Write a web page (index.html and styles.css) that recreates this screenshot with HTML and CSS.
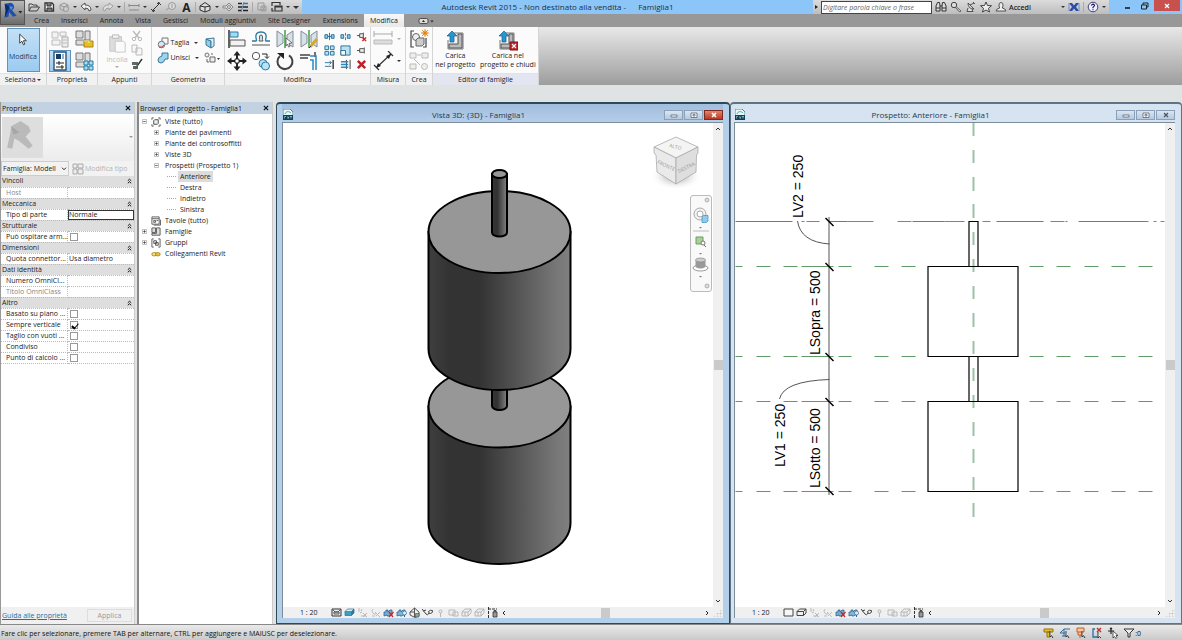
FILE: index.html
```html
<!DOCTYPE html>
<html lang="it">
<head>
  <meta charset="UTF-8">
  <meta name="viewport" content="width=device-width, initial-scale=1.0">
  <title>Autodesk Revit 2015 - Famiglia1</title>
  <link rel="stylesheet" href="styles.css">
</head>
<body>

  <!-- Shared icons -->
  <svg class="sprite" aria-hidden="true">
    <symbol id="i-rvt" viewBox="0 0 10 11"><path d="M0 0h7l3 3v5H0z" fill="#e9f6f6" stroke="#2d6f86" stroke-width=".8"/><path d="M2 5c1-3 4-3 6-1" stroke="#4ba8a4" fill="none"/><path d="M0 6h10v5H0z" fill="#0b4259"/><path d="M1.500 9.500v-2h1.500M4.500 7.500l.7 2 .7-2M7 7.500h2M8 7.500v2" stroke="#cfe6f0" stroke-width=".6" fill="none"/></symbol>
    <symbol id="i-box" viewBox="0 0 11 11"><path d="M1 4.500h6.500v4H1zM1 4.500l2.500-2.500h6.500L7.500 4.500M10 2v4L7.500 8.500" fill="none" stroke="#444"/></symbol>
    <symbol id="i-boxblue" viewBox="0 0 11 11"><path d="M1 4.500h6.500v4H1z" fill="#39a0c4"/><path d="M1 4.500l2.500-2.500h6.500L7.500 4.500z" fill="#d7f0f7"/><path d="M10 2v4L7.500 8.500v-4z" fill="#2f7997"/><path d="M1 4.500h6.500v4H1zM1 4.500l2.500-2.500h6.500L7.500 4.500M10 2v4L7.500 8.500" fill="none" stroke="#316f88" stroke-width=".7"/></symbol>
    <symbol id="i-sun" viewBox="0 0 11 11"><path d="M2 1v2M1 4h2M5 2L4 4M3 6l2-1M6 6l4 4M10 6L6 10M4 9h5" stroke="#b9b9b9" fill="none"/></symbol>
    <symbol id="i-shade" viewBox="0 0 11 11"><path d="M3 2a3 3 0 0 0 3 5M5 5l5 5M10 5L6 9M2 9h3" stroke="#bdbdbd" fill="none"/></symbol>
    <symbol id="i-crop" viewBox="0 0 11 11"><path d="M1 5h2V3h2v2l2-2h2v5H7l-1 1H4V8L1 9z" fill="#6fb0d8" stroke="#275a83" stroke-width=".7"/><path d="M6 5l4 5M10.500 5L6 10" stroke="#c22c2c" stroke-width="1.300"/></symbol>
    <symbol id="i-crop2" viewBox="0 0 11 11"><path d="M1 5h2V3h2v2l2-2h2v5H7l-1 1H4V8L1 9z" fill="#7db8dc" stroke="#275a83" stroke-width=".7"/><circle cx="8.500" cy="6" r="2" fill="#e4f2fa" stroke="#33668c" stroke-width=".7"/><path d="M8.500 8v2" stroke="#33668c"/></symbol>
    <symbol id="i-house" viewBox="0 0 11 11"><path d="M1 5l4.500-4L10 5v4l-4 1.500L1 8zM5.500 1v4M1 5l4.500 0V10" fill="none" stroke="#454545" stroke-width=".9"/><path d="M6.500 6.500h3.500v3.500H6.500z" fill="#8aa" stroke="#444" stroke-width=".6"/></symbol>
    <symbol id="i-glasses" viewBox="0 0 11 11"><path d="M0 2l4 5q1.500 1.500 2.500 0t0-2.500q2-2 4-1 .5 2.500-2 3L6.500 6M1 4l3-1" fill="none" stroke="#444"/></symbol>
    <symbol id="i-bulb" viewBox="0 0 11 11"><circle cx="5.500" cy="4.500" r="1.500" fill="none" stroke="#b4b4b4"/><path d="M5.500 6v4" stroke="#b4b4b4"/></symbol>
    <symbol id="i-ghost" viewBox="0 0 11 11"><path d="M1 3h6v5H1zM5 5h5v4H5z" fill="none" stroke="#b4b4b4" stroke-width=".9"/></symbol>
    <symbol id="i-ghost2" viewBox="0 0 11 11"><path d="M1 5l3-3h6v4L7 9H1zM1 5h6v4M7 5l3-3M4 5v4" fill="none" stroke="#b0b0b0" stroke-width=".9"/></symbol>
    <symbol id="i-lock" viewBox="0 0 11 11"><path d="M1.500 0v11M1 2h9" stroke="#333" stroke-dasharray="3 1"/><path d="M6 5h4v5H6zM7 5V3.500h2V5" fill="#999" stroke="#333" stroke-width=".8"/></symbol>
    <symbol id="i-exp" viewBox="0 0 5 5"><path d="M.5.5h4v4h-4z" fill="#fff" stroke="#999" stroke-width=".6"/><path d="M1.200 2.500h2.600M2.500 1.200v2.600" stroke="#333" stroke-width=".7"/></symbol>
    <symbol id="i-col" viewBox="0 0 5 5"><path d="M.5.5h4v4h-4z" fill="#fff" stroke="#999" stroke-width=".6"/><path d="M1.200 2.500h2.600" stroke="#333" stroke-width=".7"/></symbol>
    <symbol id="i-cursor" viewBox="0 0 8 12"><path d="M.7.7v9l2.200-2 1.500 3.600 1.500-.7L4.400 7.200h3z" fill="#fff" stroke="#333" stroke-width=".9"/></symbol>
    <symbol id="i-fold" viewBox="0 0 5 6"><path d="M.8 2.800l1.700-1.600 1.700 1.600M.8 5.300l1.700-1.600 1.700 1.600" fill="none" stroke="#111"/></symbol>
  </svg>

  <header class="top">
    <button class="app" aria-label="Menu applicazione">
      <svg viewBox="0 0 25 25"><path d="M4 3l7-1q4 2 3 6l-2 2 5 6-4 1-4-5-1 5-4 1 1-8z" fill="#1c4fae"/><path d="M4 3l5 3-1 4-4 8 1-8z" fill="#0b2a72"/><path d="M9 6l4 0-2 4z" fill="#5d8fd6"/><path d="M19 11h4l-2 2.500z" fill="#222"/></svg>
    </button>

    <div class="titlebar">
      <div class="qat">
        <button aria-label="Apri"><svg viewBox="0 0 12 12"><path d="M1 10V3h3l1 1h4v2M1 10l2-4h8.500L9 10z" fill="none" stroke="#444"/></svg></button>
        <button aria-label="Salva"><svg viewBox="0 0 12 12"><path d="M2 2h7l1.500 1.500V10H2z" fill="#eee" stroke="#333" stroke-width="1.300"/><path d="M4 2v3h4V2M4 10V7h5v3" fill="#777" stroke="#333"/></svg></button>
        <button aria-label="Sincronizza"><svg viewBox="0 0 12 12"><path d="M2 4l4-2 4 2v4l-4 2-4-2zM2 4l4 2 4-2M6 6v4" fill="none" stroke="#999"/><circle cx="8" cy="8" r="2.500" fill="#ccc" stroke="#999"/></svg></button>
        <i class="dd"></i>
        <button aria-label="Annulla"><svg viewBox="0 0 12 12"><path d="M1 5l4-3v2q6 0 6 5l-2 1q0-3-4-3v2z" fill="#eee" stroke="#444" stroke-width=".9"/></svg></button>
        <i class="dd"></i>
        <button aria-label="Ripeti"><svg viewBox="0 0 12 12"><path d="M11 5L7 2v2q-6 0-6 5l2 1q0-3 4-3v2z" fill="#ddd" stroke="#999" stroke-width=".9"/></svg></button>
        <i class="dd"></i>
        <i class="vr"></i>
        <button aria-label="Misura"><svg viewBox="0 0 12 12"><path d="M1 4.500h10M1 3v3M11 3v3M1 9h10" fill="none" stroke="#888"/></svg></button>
        <i class="dd"></i>
        <button aria-label="Quota allineata"><svg viewBox="0 0 12 12"><path d="M2 10L10 2M1 8l3 3M8 1l3 3M2 10l3-.5M10 2l-3 .5" fill="none" stroke="#333"/></svg></button>
        <button aria-label="Etichetta"><svg viewBox="0 0 12 12"><circle cx="7" cy="5" r="3.500" fill="#ddd" stroke="#999"/><path d="M1 9l3-2M7 3v4" stroke="#999"/></svg></button>
        <button class="letter" aria-label="Testo">A</button>
        <i class="vr"></i>
        <button aria-label="Vista 3D"><svg viewBox="0 0 12 12"><path d="M1 5l5-3.500L11 5v4l-5 2-5-2zM1 5l5 1 5-1M6 6v5" fill="#ddd" stroke="#333"/></svg></button>
        <i class="dd"></i>
        <button aria-label="Sezione"><svg viewBox="0 0 12 12"><path d="M7 2l4 4-4 4-3-3H1V5h3z" fill="#ddd" stroke="#888"/><circle cx="7" cy="6" r="1.500" fill="none" stroke="#888"/></svg></button>
        <button aria-label="Linee sottili"><svg viewBox="0 0 12 12"><path d="M1 2.500h4M1 6h4M1 9.500h4M6 6h5M6 9.500h5" stroke="#222" stroke-width="1.500"/><path d="M6 2.500h5" stroke="#37a" stroke-width="1.500"/><path d="M7 1L4 11" stroke="#58b"/></svg></button>
        <i class="vr"></i>
        <button aria-label="Chiudi nascoste"><svg viewBox="0 0 12 12"><path d="M2 2h6v7H2zM5 5h5v5H5zM6 6l3 3M9 6L6 9" fill="none" stroke="#999"/></svg></button>
        <button aria-label="Cambia finestra"><svg viewBox="0 0 12 12"><path d="M1 5V1.500h8V4M4 5h7v5H4zM4 6h7M1 7v3h2" fill="none" stroke="#333" stroke-width="1.200"/></svg></button>
        <i class="dd"></i>
        <i class="dd more"></i>
      </div>

      <h1>Autodesk Revit 2015 - Non destinato alla vendita - <span>Famiglia1</span></h1>

      <div class="infocenter">
        <i class="play"></i>
        <input type="text" placeholder="Digitare parola chiave o frase" aria-label="Cerca">
        <button aria-label="Trova"><svg viewBox="0 0 12 12"><path d="M1 10V5l1.500-3.500h2L5 5v5zM7 10V5l.5-3.500h2L11 5v5zM5 5h2M1 7h4M7 7h4" fill="#ddd" stroke="#333"/></svg></button>
        <button aria-label="Abbonamento"><svg viewBox="0 0 12 12"><circle cx="4" cy="4" r="2.700" fill="#ddd" stroke="#444"/><path d="M6 5.500l5 4.500-1.500 1-4.500-5" fill="#ddd" stroke="#444" stroke-width=".8"/></svg></button>
        <button aria-label="Comunicazioni"><svg viewBox="0 0 12 12"><path d="M3 2q0 6 6 6zM5 4l4-2M3 7l-1 3.500h6L7 8M8 1l2 2" fill="#ddd" stroke="#444" stroke-width=".9"/></svg></button>
        <button aria-label="Preferiti"><svg viewBox="0 0 12 12"><path d="M6 1l1.500 3.500 4 .2-3 2.600 1 3.700L6 9l-3.500 2 1-3.700-3-2.600 4-.2z" fill="#eee" stroke="#333" stroke-width=".9"/></svg></button>
        <button class="signin"><svg viewBox="0 0 12 12"><path d="M6 1.500q2.500 0 2 3.500L7.300 7q3.200.5 3.700 3H1q.5-2.500 3.700-3L4 5q-.5-3.500 2-3.500z" fill="#eee" stroke="#444" stroke-width=".9"/></svg>Accedi</button>
        <i class="dd"></i>
        <button aria-label="Exchange"><svg viewBox="0 0 12 12"><path d="M1 2h3l2 2.500L8 2h3L8 6l3 4H8L6 7.500 4 10H1l3-4z" fill="#2a4ca8"/><path d="M1 2v8M11 2v8" stroke="#6f8bd0"/></svg></button>
        <i class="vr"></i>
        <button aria-label="Guida"><svg viewBox="0 0 12 12"><circle cx="6" cy="6" r="4.800" fill="#eef" stroke="#447"/><path d="M4.500 4.700q.2-1.500 1.600-1.500 1.500.1 1.400 1.400L6 6.500v.8M6 8.200v1" fill="none" stroke="#227" stroke-width="1.200"/></svg></button>
        <i class="dd"></i>
      </div>
      <div class="winctl">
        <button aria-label="Riduci"><svg viewBox="0 0 12 12"><path d="M3 8h5" stroke="#111" stroke-width="1.500"/></svg></button>
        <button aria-label="Ripristina"><svg viewBox="0 0 12 12"><path d="M3.500 5h5v4h-5zM5 5V3h5v4H8.500" fill="none" stroke="#222"/></svg></button>
        <button class="close" aria-label="Chiudi"><svg viewBox="0 0 12 12"><path d="M4 4l4 4M8 4L4 8" stroke="#fff" stroke-width="1.300"/></svg></button>
      </div>
    </div>

    <nav class="tabs">
      <a href="#">Crea</a>
      <a href="#">Inserisci</a>
      <a href="#">Annota</a>
      <a href="#">Vista</a>
      <a href="#">Gestisci</a>
      <a href="#">Moduli aggiuntivi</a>
      <a href="#">Site Designer</a>
      <a href="#">Extensions</a>
      <a href="#" class="active">Modifica</a>
      <button aria-label="Riduci barra"><svg viewBox="0 0 16 8"><rect x="1" y="1.500" width="9" height="5" rx="1.500" fill="#ddd" stroke="#333" stroke-width=".8"/><path d="M4 5h3L5.500 3zM12.500 3.500h3L14 5.500z" fill="#222"/></svg></button>
    </nav>
  </header>

  <!-- Ribbon -->
  <section class="ribbon">
    <div class="panel p-select">
      <div class="tools">
        <button class="big on"><svg class="cur"><use href="#i-cursor"/></svg>Modifica</button>
      </div>
      <h2>Seleziona <i class="dd"></i></h2>
    </div>

    <div class="panel p-prop">
      <div class="tools grid2">
        <button aria-label="Tipi famiglia"><svg viewBox="0 0 20 20"><path d="M2 3h6v6H2zM10 3h6v4h-6zM2 11h8v5H2z" fill="#f3f3f3" stroke="#bbb"/><path d="M12 8h6v10h-6z" fill="#eee" stroke="#aaa"/><path d="M13 11h4M13 14h4" stroke="#bbb"/></svg></button>
        <button aria-label="Categoria"><svg viewBox="0 0 20 20"><path d="M2 2h7v7H2zM11 2h5v9h-5zM2 11h9v5H2z" fill="#ddd" stroke="#777"/><path d="M10 12h9v6h-9z" fill="#e8bd2c" stroke="#a98413"/><path d="M10 12h5v2" stroke="#fff0a0" fill="none"/></svg></button>
        <button class="on" aria-label="Proprietà"><svg viewBox="0 0 20 20"><path d="M4 1h12v18H4z" fill="#fff" stroke="#2d5277" stroke-width="1.400"/><path d="M6 3h5v5H6z" fill="#143d68"/><path d="M12 3h2v5h-2z" fill="#8fb3d3"/><path d="M6 12h8M6 16h8M9 10v4M12 14v4" stroke="#222"/></svg></button>
        <button aria-label="Tipi"><svg viewBox="0 0 20 20"><path d="M2 2h7v7H2zM11 2h5v9h-5zM2 11h9v5H2z" fill="#ddd" stroke="#777"/><path d="M10 10h4v4h-4zM15 10h4v4h-4zM10 15h4v4h-4zM15 15h4v4h-4z" fill="#a8ddf3" stroke="#2a7ba3"/></svg></button>
      </div>
      <h2>Proprietà</h2>
    </div>

    <div class="panel p-clip">
      <div class="tools">
        <button class="big dim" disabled><svg class="paste" viewBox="0 0 20 22"><path d="M2 4h13v16H2z" fill="#ddd" stroke="#c4c4c4"/><path d="M5 2h7v4H5z" fill="#eee" stroke="#bbb"/><path d="M8 9h9l2 2v10H8z" fill="#fafafa" stroke="#c4c4c4"/></svg>Incolla<i class="dd"></i></button>
        <div class="stack">
          <button aria-label="Taglia negli Appunti"><svg viewBox="0 0 12 12"><path d="M2 1l6 7M9 1L4 8" stroke="#bbb" stroke-width="1.400"/><circle cx="3" cy="9" r="1.700" fill="none" stroke="#bbb"/><circle cx="9" cy="9" r="1.700" fill="none" stroke="#bbb"/></svg></button>
          <button aria-label="Copia"><svg viewBox="0 0 12 12"><path d="M1 1h5v7H1zM5 4h5l1 1v6H5z" fill="#f7f7f7" stroke="#bbb"/></svg></button>
          <button aria-label="Corrispondenza tipo"><svg viewBox="0 0 12 12"><path d="M1 4h6v3H1zM2 8v3h5V8" fill="#666"/><path d="M11 1L6 8 4 11" stroke="#4a6a55" stroke-width="1.500"/><path d="M11 1L7 7" stroke="#333"/></svg></button>
        </div>
      </div>
      <h2>Appunti</h2>
    </div>

    <div class="panel p-geo">
      <div class="tools geo">
        <button><svg viewBox="0 0 12 12"><path d="M5 1h6v6H5z" fill="#f7f7f7" stroke="#777"/><circle cx="4.500" cy="7.500" r="3.300" fill="#c9ebf8" stroke="#777"/><path d="M2 10q3 1 5-2" fill="none" stroke="#c33"/></svg>Taglia <i class="dd"></i></button>
        <button aria-label="Dividi faccia"><svg viewBox="0 0 12 12"><path d="M2 2l5 2v7L2 8z" fill="#8fcdea" stroke="#3c7795"/><path d="M2 2l8-1v8l-3 2V4z" fill="#dbeff8" stroke="#3c7795"/></svg></button>
        <button><svg viewBox="0 0 12 12"><path d="M5 1h6v6H8q-1 4-4 4t-3-3 4-4z" fill="#9fd3ee" stroke="#3c7795"/></svg>Unisci <i class="dd"></i></button>
        <button aria-label="Demolisci"><svg viewBox="0 0 16 12"><circle cx="3" cy="3" r="2" fill="#eee" stroke="#777"/><path d="M6 5h5v5H6zM3 7v3h2M7 2h2" fill="#eee" stroke="#666"/><path d="M13 6h3l-1.500 2z" fill="#333"/></svg></button>
      </div>
      <h2>Geometria</h2>
    </div>

    <div class="panel p-mod">
      <div class="tools">
        <div class="grid4">
          <button aria-label="Allinea"><svg viewBox="0 0 20 20"><path d="M2 1v18" stroke="#333" stroke-width="1.500"/><path d="M3 3h8v5H3z" fill="#a5dbf2" stroke="#2a7ba3"/><path d="M3 11h15v6H3z" fill="#f2f2f2" stroke="#555"/></svg></button>
          <button aria-label="Offset"><svg viewBox="0 0 20 20"><path d="M1 12h4q1 0 0-3Q4 3 10 3t5 6q-1 3 0 3h4" fill="none" stroke="#2a7ba3" stroke-width="1.300"/><path d="M1 16h18M8 12h4q-1-1-.5-4 0-2-1.500-2T8.500 8q.5 3-.5 4z" fill="#d5edf7" stroke="#555"/></svg></button>
          <button aria-label="Specchio - Seleziona asse"><svg viewBox="0 0 20 20"><path d="M2 2l6 4v8l-6 4zM18 2l-6 4v8l6 4z" fill="#d5e3e8" stroke="#889"/><path d="M10 1v18" stroke="#2f9a3e" stroke-width="1.400"/><path d="M11 9l6 5-3 .5 1 3-1.500.5-1-3L11 17z" fill="#fff" stroke="#555" stroke-width=".8"/></svg></button>
          <button aria-label="Specchio - Disegna asse"><svg viewBox="0 0 20 20"><path d="M2 2l6 4v8l-6 4zM18 2l-6 4v8l6 4z" fill="#d5e3e8" stroke="#889"/><path d="M10 1v18" stroke="#2f9a3e" stroke-width="1.400"/><path d="M11 18l7-8" stroke="#d8a929" stroke-width="3"/><path d="M10 19l2-2" stroke="#333"/></svg></button>
          <button aria-label="Sposta"><svg viewBox="0 0 20 20"><path d="M10 0l3.500 4.500h-7zM10 20l3.500-4.500h-7zM0 10l4.500-3.500v7zM20 10l-4.500-3.500v7z" fill="#222"/><path d="M10 4v12M4 10h12" stroke="#222" stroke-width="2"/><path d="M8 8h4v4H8z" fill="#fff" stroke="#222"/></svg></button>
          <button aria-label="Copia"><svg viewBox="0 0 20 20"><circle cx="5" cy="5" r="3.700" fill="#fff" stroke="#555"/><path d="M11 3h5v4M14 5.500l2 2 2-2" fill="none" stroke="#222"/><circle cx="12" cy="12.500" r="4" fill="#b8e2f5" stroke="#2a7ba3"/><circle cx="14.500" cy="15" r="4" fill="#b8e2f5" stroke="#2a7ba3"/></svg></button>
          <button aria-label="Ruota"><svg viewBox="0 0 20 20"><path d="M5 5a7.500 7.500 0 1 0 9-.7" fill="none" stroke="#444" stroke-width="2"/><path d="M2 2h7v6z" fill="#222"/></svg></button>
          <button aria-label="Taglia/Estendi ad angolo"><svg viewBox="0 0 20 20"><path d="M1 4h10M1 7h8M16 1v5" stroke="#444" stroke-width="1.500"/><path d="M11 5h6v14M11 9h3v10" fill="none" stroke="#2a8cc0" stroke-width="1.500"/></svg></button>
        </div>
        <div class="grid3">
          <button aria-label="Dividi"><svg viewBox="0 0 12 12"><path d="M1 4h3v4H1zM8 4h3v4H8z" fill="#8fcdea" stroke="#2a6d93"/><path d="M4 6h4M6 2v8" stroke="#2a6d93"/></svg></button>
          <button aria-label="Dividi con spazio"><svg viewBox="0 0 12 12"><path d="M1 4h3v4H1zM8 4h3v4H8z" fill="#8fcdea" stroke="#2a6d93"/><path d="M6 2v3M6 7v3" stroke="#a44"/></svg></button>
          <button aria-label="Sblocca"><svg viewBox="0 0 12 12"><path d="M1 5h3M4 3v4h3l1 1V2L7 3z" fill="#eee" stroke="#444"/><path d="M7 7l4 4M11 7l-4 4" stroke="#c22c2c" stroke-width="1.500"/></svg></button>
          <button aria-label="Serie"><svg viewBox="0 0 12 12"><path d="M1 1h4v4H1zM7 1h4v4H7zM1 7h4v4H1zM7 7h4v4H7z" fill="#b8e2f5" stroke="#2a6d93"/></svg></button>
          <button aria-label="Scala"><svg viewBox="0 0 12 12"><path d="M1 1h10v10H1z" fill="#b8e2f5" stroke="#2a6d93"/><path d="M1 6h5v5H1z" fill="#fff" stroke="#2a6d93"/></svg></button>
          <button aria-label="Blocca"><svg viewBox="0 0 12 12"><path d="M1 6h3M4 4v4h4l1 1V3L8 4z" fill="#eee" stroke="#444"/></svg></button>
          <button aria-label="Estendi singolo"><svg viewBox="0 0 12 12"><path d="M10 1v10" stroke="#333" stroke-width="1.500"/><path d="M1 4h7M1 8h7M6 2l2 2-2 2" fill="none" stroke="#2a6d93"/></svg></button>
          <button aria-label="Estendi multiplo"><svg viewBox="0 0 12 12"><path d="M11 1v10M7 1v10" stroke="#333"/><path d="M1 3h8M1 6h8M1 9h8" stroke="#2a8cc0" stroke-width="1.500"/></svg></button>
          <button aria-label="Elimina"><svg viewBox="0 0 12 12"><path d="M2 2l8 8M10 2l-8 8" stroke="#b8242a" stroke-width="2.700"/></svg></button>
        </div>
      </div>
      <h2>Modifica</h2>
    </div>

    <div class="panel p-mis">
      <div class="tools col">
        <button class="wide" aria-label="Quota"><svg viewBox="0 0 30 20"><path d="M1 5h18M1 2v6M19 2v6" stroke="#aaa"/><path d="M1 11h18v4H1z" fill="#ddd" stroke="#bbb"/><path d="M24 9h4l-2 2z" fill="#aaa"/></svg></button>
        <button class="wide" aria-label="Misura distanza"><svg viewBox="0 0 30 20"><path d="M3 17L18 3M1 14l5 5M15 0l5 5" stroke="#333" stroke-width="1.200"/><path d="M3 17l5-2-3-3zM18 3l-5 2 3 3z" fill="#222"/><path d="M24 9h4l-2 2z" fill="#333"/></svg></button>
      </div>
      <h2>Misura</h2>
    </div>

    <div class="panel p-crea">
      <div class="tools col">
        <button aria-label="Crea gruppo"><svg viewBox="0 0 20 20"><path d="M5 2H2v16h3M14 18h3V9" fill="none" stroke="#444" stroke-width="1.200"/><circle cx="7" cy="8" r="3.500" fill="#eee" stroke="#666"/><path d="M7 11l2-2h6v6l-2 2H7z" fill="#ccc" stroke="#666"/><circle cx="16" cy="4" r="2.500" fill="#f9c04a"/><path d="M16 0v8M12 4h8M13 1l6 6M19 1l-6 6" stroke="#e07818" stroke-width=".8"/></svg></button>
        <button aria-label="Crea simile"><svg viewBox="0 0 20 20"><path d="M1 2h6v5H1zM13 2h6v5h-6zM1 13h6v5H1zM8 4h4M5 8l6 6" fill="#eee" stroke="#bbb"/><circle cx="15.500" cy="15.500" r="3" fill="#eee" stroke="#bbb"/></svg></button>
      </div>
      <h2>Crea</h2>
    </div>

    <div class="panel p-edit">
      <div class="tools">
        <button class="big"><svg class="load" viewBox="0 0 20 20"><path d="M9 2h9v16H3V9" fill="#f4f4f4" stroke="#777"/><path d="M13 3h4v14H4v-4h9z" fill="#bbb" stroke="#555"/><path d="M7 0l5 5H9v6H5V5H2z" fill="#2795cf" stroke="#14608d" stroke-width=".7"/></svg>Carica<br>nel progetto</button>
        <button class="big"><svg class="load" viewBox="0 0 20 20"><path d="M8 2h8v16H2V9" fill="#f4f4f4" stroke="#777"/><path d="M11 3h4v14H3v-4h8z" fill="#bbb" stroke="#555"/><path d="M6 0l5 5H8v6H4V5H1z" fill="#2795cf" stroke="#14608d" stroke-width=".7"/><path d="M12 11h8v8h-8z" fill="#c0272d" stroke="#7d1216"/><path d="M14 13l4 4M18 13l-4 4" stroke="#fff" stroke-width="1.200"/></svg>Carica nel<br>progetto e chiudi</button>
      </div>
      <h2>Editor di famiglie</h2>
    </div>
  </section>

  <main class="work">

    <!-- Properties palette -->
    <aside class="palette props">
      <div class="pal-title">Proprietà<button aria-label="Chiudi proprietà"><svg viewBox="0 0 7 7"><path d="M1 1l5 5M6 1L1 6" stroke="#111" stroke-width="1.400"/></svg></button></div>
      <div class="type">
        <svg class="thumb" viewBox="0 0 40 40"><path d="M9 9l9-5 8 5 2 5-5 5 7 9-4 3-10-8-4-2-2 10-5-1 3-14z" fill="#bababa"/><path d="M9 9l8 6-6 2z" fill="#a6a6a6"/></svg>
        <i class="dd"></i>
      </div>
      <div class="filter">
        <div class="pick">
          <select aria-label="Filtro"><option>Famiglia: Modell</option></select>
          <svg viewBox="0 0 6 4"><path d="M1 .7l2 2 2-2" fill="none" stroke="#222"/></svg>
        </div>
        <button disabled><svg viewBox="0 0 12 12"><path d="M1 1h4v4H1zM6 1h5v4H6zM1 6h4v5H1zM6 6h5v5H6z" fill="#eee" stroke="#aaa"/></svg>Modifica tipo</button>
      </div>
      <table>
        <tr class="group"><th>Vincoli</th><th><svg><use href="#i-fold"/></svg></th></tr>
        <tr class="ro"><td>Host</td><td></td></tr>
        <tr class="group"><th>Meccanica</th><th><svg><use href="#i-fold"/></svg></th></tr>
        <tr><td><label for="tipo">Tipo di parte</label></td><td><input id="tipo" class="cell focus" type="text" value="Normale"></td></tr>
        <tr class="group"><th>Strutturale</th><th><svg><use href="#i-fold"/></svg></th></tr>
        <tr><td><label for="arm">Può ospitare arm...</label></td><td><input id="arm" type="checkbox"></td></tr>
        <tr class="group"><th>Dimensioni</th><th><svg><use href="#i-fold"/></svg></th></tr>
        <tr><td><label for="quota">Quota connettor...</label></td><td><input id="quota" class="cell" type="text" value="Usa diametro"></td></tr>
        <tr class="group"><th>Dati identità</th><th><svg><use href="#i-fold"/></svg></th></tr>
        <tr><td><label for="omni">Numero OmniCl...</label></td><td><input id="omni" class="cell" type="text"></td></tr>
        <tr class="ro"><td>Titolo OmniClass</td><td></td></tr>
        <tr class="group"><th>Altro</th><th><svg><use href="#i-fold"/></svg></th></tr>
        <tr><td><label for="piano">Basato su piano ...</label></td><td><input id="piano" type="checkbox"></td></tr>
        <tr><td><label for="vert">Sempre verticale</label></td><td><input id="vert" type="checkbox" checked></td></tr>
        <tr><td><label for="vuoti">Taglio con vuoti ...</label></td><td><input id="vuoti" type="checkbox"></td></tr>
        <tr><td><label for="cond">Condiviso</label></td><td><input id="cond" type="checkbox"></td></tr>
        <tr><td><label for="punto">Punto di calcolo ...</label></td><td><input id="punto" type="checkbox"></td></tr>
      </table>
      <div class="pal-foot"><a href="#">Guida alle proprietà</a><button disabled>Applica</button></div>
    </aside>

    <!-- Project browser -->
    <aside class="palette browser">
      <div class="pal-title">Browser di progetto - Famiglia1<button aria-label="Chiudi browser"><svg viewBox="0 0 7 7"><path d="M1 1l5 5M6 1L1 6" stroke="#111" stroke-width="1.400"/></svg></button></div>
      <ul class="tree">
        <li><svg class="ex"><use href="#i-col"/></svg><svg class="ic" viewBox="0 0 11 11"><path d="M3 1H1v2M8 1h2v2M3 10H1V8M8 10h2V8" fill="none" stroke="#555"/><path d="M3 4l1-1h4v4L7 8H3z" fill="#eee" stroke="#444"/></svg>Viste (tutto)</li>
        <li class="l2"><svg class="ex"><use href="#i-exp"/></svg>Piante dei pavimenti</li>
        <li class="l2"><svg class="ex"><use href="#i-exp"/></svg>Piante dei controsoffitti</li>
        <li class="l2"><svg class="ex"><use href="#i-exp"/></svg>Viste 3D</li>
        <li class="l2"><svg class="ex"><use href="#i-col"/></svg>Prospetti (Prospetto 1)</li>
        <li class="l3"><span class="sel">Anteriore</span></li>
        <li class="l3"><span>Destra</span></li>
        <li class="l3"><span>Indietro</span></li>
        <li class="l3"><span>Sinistra</span></li>
        <li><i class="ex"></i><svg class="ic" viewBox="0 0 11 11"><path d="M1 3V1h8v2M1 3h8v6H1zM10.500 4v6H3M3 5h2v2H3zM6 5h2" fill="none" stroke="#555"/></svg>Tavole (tutto)</li>
        <li><svg class="ex"><use href="#i-exp"/></svg><svg class="ic" viewBox="0 0 11 11"><path d="M1 1h4v5H1zM6 1h4v8H1V7h5z" fill="#ddd" stroke="#555"/></svg>Famiglie</li>
        <li><svg class="ex"><use href="#i-exp"/></svg><svg class="ic" viewBox="0 0 11 11"><path d="M3 1H1v9h2M8 1h2v9H8" fill="none" stroke="#555"/><path d="M3 3h3v3H3zM5 5h3v3H5z" fill="#ddd" stroke="#555"/></svg>Gruppi</li>
        <li><i class="ex"></i><svg class="ic" viewBox="0 0 11 11"><rect x="1" y="4" width="5" height="3.500" rx="1.700" fill="#f7e07a" stroke="#a8851a"/><rect x="5" y="4" width="5" height="3.500" rx="1.700" fill="#e8c63a" stroke="#a8851a"/></svg>Collegamenti Revit</li>
      </ul>
    </aside>

    <!-- 3D view -->
    <section class="view focused">
      <div class="view-title">
        <svg class="rvt"><use href="#i-rvt"/></svg>
        <h3>Vista 3D: {3D} - Famiglia1</h3>
        <button aria-label="Riduci"><svg viewBox="0 0 10 8"><path d="M2 4h6v2H2z" fill="#fff" stroke="#567" stroke-width=".8"/></svg></button>
        <button aria-label="Ingrandisci"><svg viewBox="0 0 10 8"><path d="M2 2h6v4.500H2zM4 3.500h2v1.500H4z" fill="#fff" stroke="#567" stroke-width=".8"/></svg></button>
        <button class="x" aria-label="Chiudi"><svg viewBox="0 0 10 8"><path d="M3 2l4 4M7 2L3 6" stroke="#fff" stroke-width="1.600"/></svg></button>
      </div>
      <div class="view-body">
        <div class="canvas">
          <svg class="drawing" viewBox="283 123 430 484">
            <defs>
              <linearGradient id="side">
                <stop offset="0" stop-color="#3f3f3f"/>
                <stop offset=".15" stop-color="#333"/>
                <stop offset=".36" stop-color="#333"/>
                <stop offset=".6" stop-color="#515151"/>
                <stop offset=".9" stop-color="#777"/>
                <stop offset="1" stop-color="#808080"/>
              </linearGradient>
            </defs>
            <g stroke="#000" stroke-width="2">
              <path d="M428.500 406.500V523A71 41 0 0 0 570.500 523V406.500z" fill="url(#side)"/>
              <ellipse cx="499.500" cy="406.500" rx="71" ry="41" fill="#979797"/>
              <path d="M492 370V406A7.500 4 0 0 0 507 406V370z" fill="url(#side)"/>
              <path d="M428.500 232V349A71 41 0 0 0 570.500 349V232z" fill="url(#side)"/>
              <ellipse cx="499.500" cy="232" rx="71" ry="41" fill="#979797"/>
              <path d="M492 174V232.500A7.500 4 0 0 0 507 232.500V174z" fill="url(#side)"/>
              <ellipse cx="499.500" cy="174" rx="7.500" ry="4" fill="#979797"/>
            </g>
          </svg>
          <svg class="cube" viewBox="650 133 56 60">
            <defs><radialGradient id="shadow"><stop offset="0" stop-color="#888"/><stop offset="1" stop-color="#fff" stop-opacity="0"/></radialGradient></defs>
            <ellipse cx="676" cy="176" rx="26" ry="14" fill="url(#shadow)"/>
            <g stroke="#aaa" stroke-width=".8">
              <path d="M676 137l22 10-22 11-22-11z" fill="#f4f4f4"/>
              <path d="M654 147l22 11v26l-19-12-1-17-2-2z" fill="#eaeaea"/>
              <path d="M698 147l-22 11v26l20-12 .5-17 1.500-2z" fill="#dedede"/>
            </g>
            <text x="669" y="147" transform="rotate(14 669 147)">ALTO</text>
            <text x="657" y="163" transform="rotate(26 657 163)">FRONTE</text>
            <text x="679" y="173" transform="rotate(-26 679 173)">DESTRA</text>
          </svg>
          <div class="navbar">
            <svg viewBox="1 1 20 95">
              <circle cx="17" cy="5" r="2" fill="#ddd" stroke="#999" stroke-width=".7"/>
              <circle cx="10" cy="19" r="6" fill="#f2f2f2" stroke="#aaa"/><circle cx="10" cy="19" r="3" fill="#fff" stroke="#aaa"/>
              <path d="M12 22l1.500-1.500H18V26l-1.500 1.500H12z" fill="#8fcbee" stroke="#3f8db8" stroke-width=".7"/>
              <path d="M9 32h3l-1.500 1.500zM9 58h3l-1.500 1.500zM9 81h3l-1.500 1.500z" fill="#777"/>
              <path d="M3 36h16" stroke="#bbb"/>
              <path d="M6 42h7v7H6z" fill="#a9cf9a" stroke="#6d9d60"/><circle cx="13" cy="48" r="2" fill="#fff" stroke="#777"/><path d="M14 50l2 2" stroke="#777"/>
              <ellipse cx="10.500" cy="73" rx="7.500" ry="3" fill="#fff" stroke="#999"/><path d="M5.500 65v7q5 3 10 0v-7z" fill="#999"/><ellipse cx="10.500" cy="65" rx="5" ry="2" fill="#ccc" stroke="#888" stroke-width=".7"/>
              <circle cx="17" cy="91" r="2" fill="#ddd" stroke="#999" stroke-width=".7"/>
            </svg>
          </div>
        </div>
        <div class="vscroll"><svg viewBox="0 0 6 4"><path d="M1 3l2-2 2 2" fill="none" stroke="#333"/></svg><i></i><svg viewBox="0 0 6 4"><path d="M1 1l2 2 2-2" fill="none" stroke="#333"/></svg></div>
      </div>
      <div class="viewbar">
        <button class="scale">1 : 20</button>
        <div class="icons">
          <svg viewBox="0 0 11 11"><path d="M1 2h9v7H1z" fill="#eee" stroke="#333"/><path d="M1 2l3 3h3l3-3M3 5h5v2H3z" fill="none" stroke="#555"/></svg>
          <svg><use href="#i-boxblue"/></svg>
          <svg><use href="#i-sun"/></svg>
          <svg><use href="#i-shade"/></svg>
          <svg><use href="#i-crop"/></svg>
          <svg><use href="#i-crop2"/></svg>
          <svg><use href="#i-house"/></svg>
          <svg><use href="#i-glasses"/></svg>
          <svg><use href="#i-bulb"/></svg>
          <svg><use href="#i-ghost"/></svg>
          <svg><use href="#i-ghost2"/></svg>
          <svg><use href="#i-ghost2"/></svg>
          <svg><use href="#i-lock"/></svg>
        </div>
        <div class="hscroll"><svg viewBox="0 0 4 6"><path d="M3 1L1 3l2 2" fill="none" stroke="#222"/></svg><i></i><svg viewBox="0 0 4 6"><path d="M1 1l2 2-2 2" fill="none" stroke="#222"/></svg></div>
        <span class="grip"></span>
      </div>
    </section>

    <!-- Elevation view -->
    <section class="view">
      <div class="view-title">
        <svg class="rvt"><use href="#i-rvt"/></svg>
        <h3>Prospetto: Anteriore - Famiglia1</h3>
        <button aria-label="Riduci"><svg viewBox="0 0 10 8"><path d="M2 4h6v2H2z" fill="#fff" stroke="#567" stroke-width=".8"/></svg></button>
        <button aria-label="Ingrandisci"><svg viewBox="0 0 10 8"><path d="M2 2h6v4.500H2zM4 3.500h2v1.500H4z" fill="#fff" stroke="#567" stroke-width=".8"/></svg></button>
        <button aria-label="Chiudi"><svg viewBox="0 0 10 8"><path d="M3 2l4 4M7 2L3 6" stroke="#456" stroke-width="1.200"/></svg></button>
      </div>
      <div class="view-body">
        <div class="canvas">
          <svg class="drawing" viewBox="735 123 429 484">
            <!-- reference planes and level -->
            <g class="plane">
              <path d="M735 266.500h7M756 266.500h14M783 266.500h14M801 266.500h32M838 266.500h13M874 266.500h14M901 266.500h14M1029 266.500h14M1056 266.500h14M1084 266.500h14M1111 266.500h14M1138 266.500h14"/>
              <path d="M735 356.500h7M756 356.500h14M783 356.500h14M801 356.500h32M838 356.500h13M874 356.500h14M901 356.500h14M1029 356.500h14M1056 356.500h14M1084 356.500h14M1111 356.500h14M1138 356.500h14"/>
              <path d="M735 401.500h7M756 401.500h14M783 401.500h14M801 401.500h32M838 401.500h13M874 401.500h14M901 401.500h14M1029 401.500h14M1056 401.500h14M1084 401.500h14M1111 401.500h14M1138 401.500h14"/>
              <path d="M735 491.500h7M756 491.500h14M783 491.500h14M801 491.500h32M838 491.500h13M874 491.500h14M901 491.500h14M1029 491.500h14M1056 491.500h14M1084 491.500h14M1111 491.500h14M1138 491.500h14"/>
              <path d="M801 221.500h3M806 221.500h13M847 221.500h26M897 221.500h14M944 221.500h20M982 221.500h8M1050 221.500h14M1144 221.500h4M1153 221.500h3M1160 221.500h4"/>
            </g>
            <path class="level" d="M735 221.500h57M829 221.500h18M912 221.500h32M996 221.500h47M1065 221.500h2M1078 221.500h67"/>
            <path class="axis" d="M973 123v13M973 150v13M973 177v14M973 204v14M973 232v13M973 259v13M973 286v13M973 313v14M973 341v13M973 368v13M973 395v13M973 422v14M973 449v14M973 477v13M973 503v14"/>
            <!-- model -->
            <path class="model" d="M968.500 266.500v-45h9v45M927.500 266.500h90v90h-90zM968.500 356.500v45M977.500 356.500v45M927.500 401.500h90v90h-90z"/>
            <!-- dimensions -->
            <path class="dim" d="M828.500 217V495M797 221Q800 242 829 244M779 399Q783 381 829 379.500"/>
            <path class="tick" d="M825 218l8 8M825 263l8 8M825 353l8 8M825 398l8 8M825 487l8 8"/>
            <text transform="translate(802 218) rotate(-90)">LV2 = 250</text>
            <text transform="translate(819 355) rotate(-90)">LSopra = 500</text>
            <text transform="translate(784 467) rotate(-90)">LV1 = 250</text>
            <text transform="translate(819 488) rotate(-90)">LSotto = 500</text>
          </svg>
        </div>
        <div class="vscroll"><svg viewBox="0 0 6 4"><path d="M1 3l2-2 2 2" fill="none" stroke="#333"/></svg><i></i><svg viewBox="0 0 6 4"><path d="M1 1l2 2 2-2" fill="none" stroke="#333"/></svg></div>
      </div>
      <div class="viewbar">
        <button class="scale">1 : 20</button>
        <div class="icons">
          <svg viewBox="0 0 11 11"><path d="M1 2h9v7H1z" fill="#f7f7f7" stroke="#444"/></svg>
          <svg><use href="#i-box"/></svg>
          <svg><use href="#i-sun"/></svg>
          <svg><use href="#i-shade"/></svg>
          <svg><use href="#i-crop"/></svg>
          <svg><use href="#i-crop2"/></svg>
          <svg><use href="#i-glasses"/></svg>
          <svg><use href="#i-bulb"/></svg>
          <svg><use href="#i-ghost"/></svg>
          <svg><use href="#i-ghost2"/></svg>
          <svg><use href="#i-lock"/></svg>
        </div>
        <div class="hscroll"><svg viewBox="0 0 4 6"><path d="M3 1L1 3l2 2" fill="none" stroke="#222"/></svg><i></i><svg viewBox="0 0 4 6"><path d="M1 1l2 2-2 2" fill="none" stroke="#222"/></svg></div>
        <span class="grip"></span>
      </div>
    </section>
  </main>

  <footer class="status">
    <p>Fare clic per selezionare, premere TAB per alternare, CTRL per aggiungere e MAIUSC per deselezionare.</p>
    <div class="toggles">
      <button aria-label="Seleziona collegamenti"><svg viewBox="0 0 12 12"><path d="M1 2h9v3H1zM4 5h3v5H4z" fill="#e8bd2c" stroke="#957411"/><path d="M7 4v6l1.500-1.500L10 11" fill="#fff" stroke="#333"/></svg></button>
      <button aria-label="Seleziona sottostante"><svg viewBox="0 0 12 12"><path d="M1 6l4-4h6M1 6h5M3 9h4M5 2v7" fill="none" stroke="#2a6fa5"/><path d="M7 4v6l1.500-1.500L10 11" fill="#fff" stroke="#333"/></svg></button>
      <button aria-label="Seleziona bloccati"><svg viewBox="0 0 12 12"><path d="M2 1h7v4H2zM3 5v3h4V5M5 8v3" fill="#f3c9a0" stroke="#c65c22"/><path d="M7 4v6l1.500-1.500L10 11" fill="#fff" stroke="#333"/></svg></button>
      <button aria-label="Seleziona per faccia"><svg viewBox="0 0 12 12"><path d="M4 2H2v8h5" fill="none" stroke="#2a6fa5" stroke-width="1.300"/><path d="M6 1l4 4M10 1L6 5" stroke="#c22c2c" stroke-width="1.400"/><path d="M7 5v6l1.500-1.500L10 11" fill="#fff" stroke="#333"/></svg></button>
      <button aria-label="Trascina"><svg viewBox="0 0 12 12"><path d="M4 1v6M1 4h6M3 2l1-1 1 1" fill="none" stroke="#222" stroke-width="1.200"/><path d="M6 4v7l1.500-1.500L9 11.500l1-1L9 8.500h2z" fill="#fff" stroke="#333" stroke-width=".8"/></svg></button>
      <button class="count"><svg viewBox="0 0 12 12"><path d="M1 2h10L7 6v4H5V6z" fill="#eee" stroke="#333"/></svg>:0</button>
    </div>
  </footer>

</body>
</html>
```
FILE: styles.css
```css
* {
  box-sizing: border-box;
}

body {
  margin: 0;
  height: 100vh;
  display: flex;
  flex-direction: column;
  background: #e0e3e3;
  color: #222;
  font-family: "Open Sans", "Noto Sans", sans-serif;
  font-size: 7px;
  line-height: 11px;
  overflow: hidden;
}

h1, h2, h3, p, ul {
  margin: 0;
  padding: 0;
  font-size: 7px;
  font-weight: normal;
}

button, input, select {
  font: inherit;
  color: inherit;
  margin: 0;
  padding: 0;
  border: 0;
  background: none;
}

a {
  color: inherit;
  text-decoration: none;
}

svg {
  display: block;
  flex: none;
}

.sprite {
  position: absolute;
  width: 0;
  height: 0;
}

/* small dropdown arrow */
.dd {
  flex: none;
  display: inline-block;
  border: 2px solid transparent;
  border-top-color: #333;
  border-bottom: 0;
  vertical-align: middle;
}

.vr {
  width: 1px;
  height: 10px;
  background: #aaa;
}

/* Header */
.top {
  flex: none;
  display: grid;
  grid-template-columns: 25px 1fr;
  grid-template-rows: 14px 13px;
  background: #989898;
}

.app {
  grid-row: 1 / 3;
  height: 25px;
  border: 1px solid #555;
  background: linear-gradient(#b8b8b8, #6c6c6c);
}

.app svg {
  width: 23px;
  height: 23px;
}

.titlebar {
  display: flex;
  background: #8cc6f8;
}

.titlebar svg {
  width: 12px;
  height: 12px;
}

.qat, .infocenter {
  display: flex;
  align-items: center;
  background: linear-gradient(#dcdcdc, #bdbdbd);
}

.qat {
  width: 277px;
  justify-content: space-between;
  padding: 0 3px;
}

.letter {
  width: 12px;
  font-size: 12px;
  font-weight: bold;
}

.more {
  border-width: 3px;
  border-bottom: 0;
}

.titlebar h1 {
  flex: 1;
  text-align: center;
  font-size: 8px;
  line-height: 14px;
  color: #1c2f42;
}

.titlebar h1 span {
  padding-left: 10px;
}

.infocenter {
  width: 296px;
  gap: 3px;
  padding-right: 3px;
}

.play {
  border: 2px solid transparent;
  border-left: 3px solid #222;
  border-right: 0;
  margin-left: 2px;
}

.infocenter input {
  width: 111px;
  height: 13px;
  background: #fff;
  border: 1px solid #444;
  padding: 0 1px;
  font-style: italic;
}

.infocenter input::placeholder {
  color: #666;
}

.signin {
  display: flex;
  align-items: center;
  gap: 2px;
  flex: 1;
  font-weight: 600;
}

.winctl {
  width: 73px;
  display: flex;
  justify-content: flex-end;
  align-items: flex-start;
  gap: 4px;
  padding-right: 2px;
}

.winctl .close {
  width: 26px;
  height: 11px;
  display: flex;
  align-items: center;
  justify-content: center;
  background: #c8504f;
}

.tabs {
  display: flex;
  padding-left: 3px;
  line-height: 14px;
  color: #222;
}

.tabs a {
  padding: 0 6px;
}

.tabs .active {
  height: 13px;
  background: linear-gradient(#f8f8f8, #e8e8e8);
}

.tabs button {
  padding-left: 14px;
}

.tabs button svg {
  width: 16px;
  height: 8px;
}

/* Ribbon */
.ribbon {
  flex: none;
  display: flex;
  height: 58px;
  margin-bottom: 17px;
  background: linear-gradient(#e8e8e8, #9d9d9d);
}

.panel {
  display: flex;
  flex-direction: column;
  background: #fbfbfb;
  border-right: 1px solid #d5d5d5;
}

.panel h2 {
  text-align: center;
  background: #f1f1f1;
  border-top: 1px solid #e2e2e2;
  line-height: 11px;
}

.tools {
  flex: 1;
  display: flex;
  align-items: center;
  justify-content: center;
  gap: 3px;
}

.tools svg {
  width: 20px;
  height: 20px;
}

.p-select { width: 47px; }
.p-prop { width: 51px; }
.p-clip { width: 54px; }
.p-geo { width: 73px; }
.p-mod { width: 146px; }
.p-mis { width: 35px; }
.p-crea { width: 27px; }
.p-edit { width: 106px; }

.p-edit h2 {
  background: #e3e6f0;
}

.big {
  display: flex;
  flex-direction: column;
  align-items: center;
  line-height: 9px;
}

.big.on {
  width: 33px;
  height: 44px;
  padding-top: 5px;
  gap: 6px;
  color: #1d3f63;
}

.on {
  background: linear-gradient(#c4e1f6, #9acbf0);
  outline: 1px solid #5c94bf;
  outline-offset: -1px;
}

.big .cur {
  width: 8px;
  height: 13px;
}

.dim {
  color: #bbb;
  gap: 2px;
}

.dim .dd {
  border-top-color: #aaa;
}

.stack {
  display: flex;
  flex-direction: column;
  gap: 2px;
}

.stack svg, .geo svg, .grid3 svg {
  width: 12px;
  height: 12px;
}

.grid2, .grid4 {
  display: grid;
  grid-template-columns: repeat(2, 22px);
  gap: 0 2px;
  align-content: center;
}

.grid2 button {
  height: 22px;
  display: grid;
  place-items: center;
}

.grid4 {
  grid-template-columns: repeat(4, 20px);
  gap: 2px 4px;
}

.grid3 {
  display: grid;
  grid-template-columns: repeat(3, 12px);
  gap: 3px 4px;
}

.grid3 svg {
  width: 11px;
  height: 11px;
}

.p-mod .tools {
  gap: 5px;
}

.geo {
  display: grid;
  grid-template-columns: 42px 16px;
  gap: 3px 5px;
  align-content: center;
}

.geo button {
  display: flex;
  align-items: center;
  gap: 2px;
}

.geo .dd {
  margin-left: 3px;
}

.geo button:last-child svg {
  width: 16px;
}

.tools.col {
  flex-direction: column;
  gap: 2px;
}

.wide svg {
  width: 30px;
}

.p-edit .tools {
  justify-content: space-around;
  gap: 0;
}

/* Work area */
.work {
  flex: 1;
  min-height: 0;
  display: flex;
}

.palette {
  display: flex;
  flex-direction: column;
  background: #fff;
}

.props {
  width: 135px;
  margin-right: 2px;
  border-left: 1px solid #999;
  border-right: 1px solid #ccc;
}

.browser {
  width: 136px;
  margin-right: 3px;
  border-left: 2px solid #888;
  border-right: 1px solid #ccc;
}

.pal-title {
  display: flex;
  align-items: center;
  justify-content: space-between;
  height: 12px;
  padding: 0 3px 0 1px;
  background: #c3d2e3;
  color: #111;
}

.pal-title svg {
  width: 6px;
  height: 6px;
}

.type {
  display: flex;
  align-items: center;
  justify-content: space-between;
  height: 46px;
  padding: 1px 1px 3px;
  margin-top: 1px;
  background: linear-gradient(#fff, #ececec);
}

.thumb {
  width: 41px;
  height: 41px;
  background: #dedede;
}

.type .dd {
  border-top-color: #999;
}

.filter {
  display: flex;
  height: 15px;
  background: #f2f2f2;
}

.pick {
  position: relative;
  width: 68px;
}

.pick select {
  display: block;
  width: 100%;
  height: 15px;
  padding: 0 0 0 1px;
  border: 1px solid #ccc;
  background: #f2f2f2;
  appearance: none;
}

.pick svg {
  position: absolute;
  top: 6px;
  right: 2px;
  width: 6px;
  height: 4px;
  pointer-events: none;
}

.filter button {
  display: flex;
  align-items: center;
  gap: 1px;
  padding-left: 3px;
  color: #b3b3b3;
}

.filter button svg {
  width: 12px;
  height: 12px;
}

.props table {
  width: 100%;
  table-layout: fixed;
  border-collapse: collapse;
}

.props tr {
  height: 11px;
}

.props td, .props th {
  height: 11px;
  padding: 0;
  line-height: 10px;
  text-align: left;
  font-weight: normal;
  white-space: nowrap;
  border-bottom: 1px dotted #bbb;
}

.props td:first-child {
  padding-left: 5px;
  border-right: 1px dotted #bbb;
}

.props th {
  padding: 0 2px 0 1px;
  background: #dedede;
}

.props th svg {
  width: 5px;
  height: 6px;
  margin-left: auto;
}

.ro {
  color: #888;
}

.cell {
  display: block;
  width: 100%;
  height: 10px;
  padding: 0 1px;
}

.focus {
  border: 1px solid #333;
  padding: 0;
}

.props input[type="checkbox"] {
  display: block;
  appearance: none;
  width: 8px;
  height: 8px;
  margin: 1px 0 0 2px;
  border: 1px solid #999;
  background: #fff;
}

.props input[type="checkbox"]:checked::before {
  content: "";
  display: block;
  width: 3px;
  height: 5px;
  margin-left: 2px;
  border: solid #000;
  border-width: 0 1px 2px 0;
  transform: rotate(40deg);
}

.pal-foot {
  margin-top: auto;
  display: flex;
  align-items: center;
  justify-content: space-between;
  height: 17px;
  padding: 0 2px 0 1px;
  background: #f0f0f0;
}

.pal-foot a {
  color: #2a6d9e;
  text-decoration: underline;
}

.pal-foot button {
  width: 45px;
  height: 13px;
  border: 1px solid #ddd;
  color: #999;
}

.tree {
  list-style: none;
  padding: 2px 0 0 3px;
}

.tree li {
  display: flex;
  align-items: center;
  gap: 4px;
  height: 11px;
  white-space: nowrap;
}

.ex {
  width: 5px;
  height: 5px;
}

.ic {
  width: 10px;
  height: 10px;
}

.tree .l2 {
  padding-left: 12px;
  gap: 6px;
}

.tree .l3 {
  padding-left: 25px;
  gap: 2px;
}

.l3::before {
  content: "";
  width: 9px;
  border-top: 1px dotted #aaa;
}

.l3 span {
  padding: 0 2px;
}

.sel {
  background: #dcdcdc;
}

/* View windows */
.view {
  flex: 1;
  min-width: 0;
  display: flex;
  flex-direction: column;
  padding: 0 6px 5px 5px;
  background: #d6e4f1;
  border: 1px solid #5f7482;
  border-top-width: 2px;
  border-radius: 4px 4px 0 0;
}

.focused {
  background: #b4cfe9;
  border-color: #2d4a5a;
}

.view:last-child {
  padding-left: 3px;
}

.view-title {
  display: flex;
  align-items: center;
  height: 18px;
  padding: 3px 0 0 1px;
  gap: 1px;
}

.focused .view-title {
  background: linear-gradient(#a2bddd, #b4cdea);
}

.rvt {
  width: 10px;
  height: 11px;
}

.view-title h3 {
  flex: 1;
  text-align: center;
  font-size: 8px;
  color: #26394c;
}

.view-title button {
  width: 19px;
  height: 10px;
  display: grid;
  place-items: center;
  border: 1px solid #8ba1b8;
  background: linear-gradient(#dbe6f2, #b5c9df);
}

.view-title button svg {
  width: 10px;
  height: 8px;
}

.view-title .x {
  background: linear-gradient(#e0866f, #bb3722);
  border-color: #7d2b22;
}

.view-body {
  flex: 1;
  min-height: 0;
  display: flex;
  border-top: 1px solid #7c8c98;
  border-left: 1px solid #7c8c98;
}

.canvas {
  position: relative;
  flex: 1;
  min-width: 0;
  background: #fff;
}

.drawing {
  width: 100%;
  height: 100%;
}

.drawing text {
  font-family: "Liberation Sans", Arial, sans-serif;
  font-size: 14px;
}

.plane { stroke: #5f9a67; }
.level { stroke: #777; }
.axis { stroke: #9dc0a8; stroke-width: 2; }
.model { fill: none; stroke: #000; stroke-width: 1.200; }
.dim { color: #bbb; }
path.dim { fill: none; stroke: #555; }
.tick { stroke: #000; stroke-width: 1.500; }

.cube {
  position: absolute;
  top: 10px;
  right: 7px;
  width: 56px;
  height: 60px;
}

.cube text {
  font-size: 5px;
  fill: #999;
}

.navbar {
  position: absolute;
  top: 72px;
  right: 1px;
  width: 22px;
  border: 1px solid #bbb;
  border-radius: 3px;
  background: #f9f9f9;
}

.vscroll, .hscroll {
  display: flex;
  align-items: center;
  justify-content: space-between;
  background: #f0f0f0;
}

.vscroll {
  width: 10px;
  flex-direction: column;
  padding: 4px 0;
}

.vscroll svg {
  width: 6px;
  height: 4px;
}

.vscroll i, .hscroll i {
  width: 9px;
  height: 10px;
  background: #cacaca;
}

.viewbar {
  display: flex;
  align-items: center;
  height: 11px;
  padding-left: 17px;
  border-left: 1px solid #7c8c98;
  background: #f0f0f0;
}

.scale {
  width: 31px;
  text-align: left;
}

.icons {
  display: flex;
  gap: 2px;
}

.icons svg {
  width: 11px;
  height: 11px;
}

.hscroll {
  flex: 1;
  padding: 0 4px;
}

.hscroll svg {
  width: 4px;
  height: 6px;
}

.grip {
  width: 10px;
  height: 8px;
  background: radial-gradient(#bbb 40%, transparent 50%) 0 0 / 3px 3px;
  clip-path: polygon(100% 0, 100% 100%, 0 100%);
}

/* Status bar */
.status {
  flex: none;
  display: flex;
  align-items: center;
  justify-content: space-between;
  height: 16px;
  padding: 1px 41px 0 1px;
  border-top: 1px solid #888;
  background: linear-gradient(#eaeaea, #c9c9c9);
  color: #111;
}

.toggles {
  display: flex;
  gap: 4px;
}

.toggles svg {
  width: 12px;
  height: 12px;
}

.count {
  display: flex;
  align-items: center;
}
```
